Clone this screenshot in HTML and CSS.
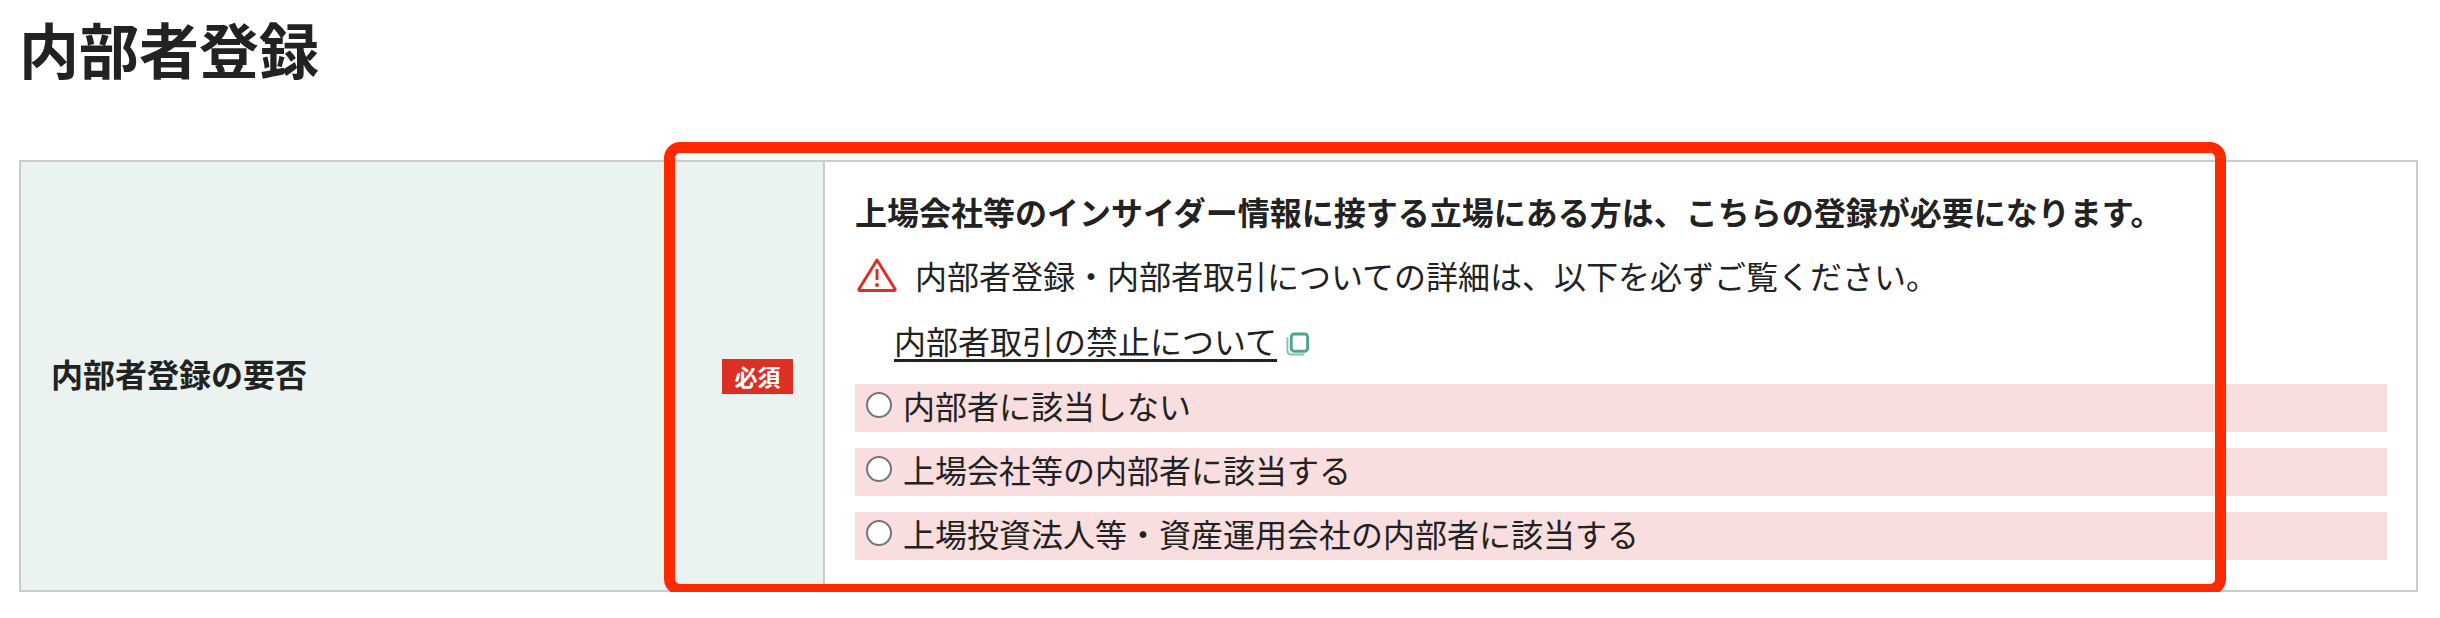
FILE: index.html
```html
<!DOCTYPE html>
<html lang="ja">

<head>
    <meta charset="UTF-8">
    <meta name="viewport" content="width=device-width, initial-scale=1.0">
    <title>内部者登録</title>
    <link rel="stylesheet" href="styles.css">
</head>

<body>
    <h1 class="page-title">内部者登録</h1>

    <div class="form-table">
        <div class="form-head">
            <span class="head-label">内部者登録の要否</span>
            <span class="required-badge">必須</span>
        </div>
        <div class="form-body">
            <p class="lead-text">上場会社等のインサイダー情報に接する立場にある方は、こちらの登録が必要になります。</p>
            <p class="notice-text">
                <svg class="warning-icon" viewBox="0 0 40 34" aria-hidden="true">
                    <path d="M20 2 L38 31 Q38.500 32.500 37 32.500 L3 32.500 Q1.500 32.500 2 31 Z" fill="none" stroke="#dc3024" stroke-width="3" stroke-linejoin="round"/>
                    <path d="M20 11 V22" fill="none" stroke="#dc3024" stroke-width="3"/>
                    <circle cx="20" cy="27" r="2" fill="#dc3024"/>
                </svg>
                <span>内部者登録・内部者取引についての詳細は、以下を必ずご覧ください。</span>
            </p>
            <p class="link-line">
                <a href="#" class="doc-link">内部者取引の禁止について</a>
                <svg class="copy-icon" viewBox="0 0 24 24" aria-hidden="true">
                    <rect x="5.500" y="1.500" width="17" height="18" rx="3" fill="none" stroke="#4fa58c" stroke-width="3"/>
                    <path d="M1.500 5 V19 Q1.500 23 5.500 23 H19" fill="none" stroke="#4fa58c" stroke-width="2" opacity="0.7"/>
                </svg>
            </p>
            <div class="option-list">
                <label class="option-row"><input type="radio" name="insider" class="option-radio"><span class="option-text">内部者に該当しない</span></label>
                <label class="option-row"><input type="radio" name="insider" class="option-radio"><span class="option-text">上場会社等の内部者に該当する</span></label>
                <label class="option-row"><input type="radio" name="insider" class="option-radio"><span class="option-text">上場投資法人等・資産運用会社の内部者に該当する</span></label>
            </div>
        </div>
        <div class="highlight-box"></div>
    </div>
</body>
</html>
```

FILE: styles.css
```css
* {
    margin: 0;
    padding: 0;
    box-sizing: border-box;
}

body {
    background-color: white;
    color: #222;
    font-family: "Noto Sans CJK JP", "Noto Sans", sans-serif;
    font-size: 32px;
    padding: 0 22px 0 19px;
    overflow: hidden;
}

.page-title {
    font-size: 60px;
    font-weight: 700;
    line-height: 96px;
    margin-bottom: 64px;
}

.form-table {
    position: relative;
    display: flex;
    border: 2px solid #ccc;
}

.form-head {
    width: 804px;
    flex-shrink: 0;
    display: flex;
    align-items: center;
    justify-content: space-between;
    padding: 0 30px 0 30px;
    background-color: #eaf3ef;
    border-right: 2px solid #ccc;
}

.head-label {
    font-weight: 700;
    padding-bottom: 6px;
}

.required-badge {
    width: 71px;
    height: 35px;
    display: flex;
    align-items: center;
    justify-content: center;
    background-color: #dc3024;
    color: white;
    font-size: 23px;
    font-weight: 700;
}

.form-body {
    flex: 1;
    padding: 17px 29px 30px 30px;
}

.lead-text {
    font-weight: 700;
    line-height: 64px;
    margin-bottom: 3px;
}

.notice-text {
    display: flex;
    align-items: center;
    gap: 18px;
    height: 64px;
    padding: 0 0 6px 2px;
}

.warning-icon {
    width: 40px;
    height: 34px;
}

.link-line {
    display: flex;
    align-items: center;
    gap: 9px;
    height: 64px;
    padding-left: 39px;
}

.doc-link {
    color: #222;
    line-height: 40px;
    margin-bottom: 4px;
    text-decoration: underline;
    text-decoration-thickness: 3px;
    text-underline-offset: 5px;
}

.copy-icon {
    width: 23px;
    height: 24px;
    margin-top: 4px;
}

.option-list {
    display: flex;
    flex-direction: column;
    gap: 16px;
    margin-top: 10px;
}

.option-row {
    display: flex;
    align-items: center;
    gap: 11px;
    height: 48px;
    padding-left: 11px;
    background-color: #f8dede;
}

.option-text {
    padding-bottom: 6px;
}

.option-radio {
    appearance: none;
    width: 26px;
    height: 26px;
    margin-top: -6px;
    background-color: white;
    border: 2px solid #767676;
    border-radius: 50%;
}

.highlight-box {
    position: absolute;
    left: 643px;
    top: -20px;
    width: 1562px;
    height: 453px;
    border: 11px solid #ff2a00;
    border-radius: 16px;
}
```
